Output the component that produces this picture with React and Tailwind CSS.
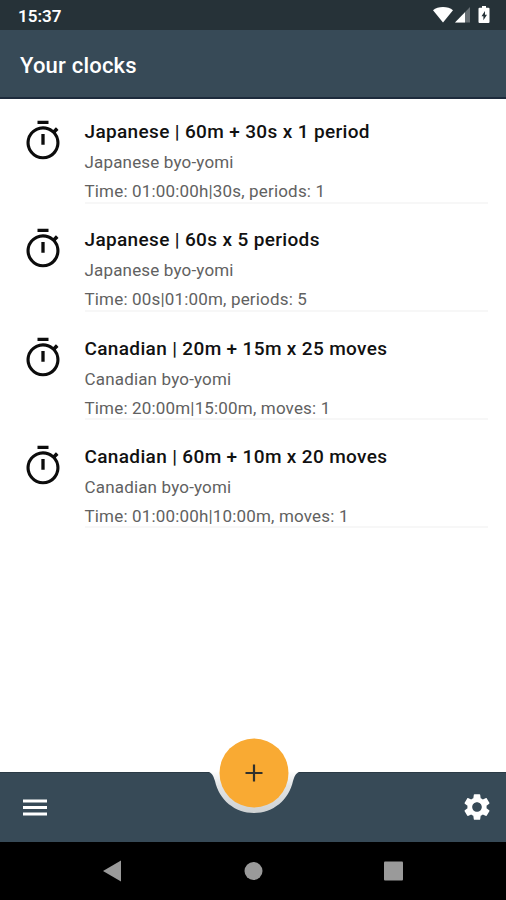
import React from 'react';

const clocks = [
  {
    title: 'Japanese | 60m + 30s x 1 period',
    type: 'Japanese byo-yomi',
    detail: 'Time: 01:00:00h|30s, periods: 1',
  },
  {
    title: 'Japanese | 60s x 5 periods',
    type: 'Japanese byo-yomi',
    detail: 'Time: 00s|01:00m, periods: 5',
  },
  {
    title: 'Canadian | 20m + 15m x 25 moves',
    type: 'Canadian byo-yomi',
    detail: 'Time: 20:00m|15:00m, moves: 1',
  },
  {
    title: 'Canadian | 60m + 10m x 20 moves',
    type: 'Canadian byo-yomi',
    detail: 'Time: 01:00:00h|10:00m, moves: 1',
  },
];

// ===================================================================
// ICONS
// ===================================================================
const TimerIcon = () => (
  <svg className="w-11 h-11 mt-px shrink-0" viewBox="0 0 24 24" fill="#0c0c0c">
    <path d="M9 1h6v1.700H9zM11.100 8.200h1.800v5.800h-1.800z" />
    <path
      fillRule="evenodd"
      d="M19.03 7.39l1.42-1.42c-.43-.51-.9-.99-1.41-1.41l-1.42 1.42A8.96 8.96 0 0 0 12 4a9 9 0 1 0 7.03 3.39zM12 20.300a7.300 7.300 0 1 1 0-14.600 7.300 7.300 0 0 1 0 14.600z"
    />
  </svg>
);

const StatusIcons = () => (
  <svg className="w-[60px] h-5" viewBox="0 0 60 20" fill="#fff">
    <path d="M1 5.200C3.600 3.100 7 2 11 2s7.400 1.100 10 3.200L11 17.500z" />
    <path d="M38 2v15.500H23z" fillOpacity=".3" />
    <path d="M33 7.200v10.300H23z" />
    <path
      fillRule="evenodd"
      d="M50 1h4v1.800h2.500q1 0 1 1V17q0 1-1 1h-9q-1 0-1-1V3.800q0-1 1-1H50zM53 6l-3.500 5.200h1.900V15.200L55 9.800h-2z"
    />
  </svg>
);

const GearIcon = () => (
  <svg className="w-8 h-8 mb-0.5" viewBox="0 0 24 24" fill="#fff">
    <path d="M19.14 12.94c.04-.3.06-.61.06-.94 0-.32-.02-.64-.07-.94l2.03-1.58c.18-.14.23-.41.12-.61l-1.92-3.32c-.12-.22-.37-.29-.59-.22l-2.39.96c-.5-.38-1.03-.7-1.62-.94l-.36-2.54c-.04-.24-.24-.41-.48-.41h-3.84c-.24 0-.43.17-.47.41l-.36 2.54c-.59.24-1.13.57-1.62.94l-2.39-.96c-.22-.08-.47 0-.59.22L2.740 8.870c-.12.21-.08.47.12.61l2.03 1.58c-.05.3-.09.63-.09.94s.02.64.07.94l-2.03 1.58c-.18.14-.23.41-.12.61l1.920 3.320c.12.22.37.29.59.22l2.390-.96c.5.38 1.030.7 1.620.94l.36 2.540c.05.24.24.41.48.41h3.840c.24 0 .44-.17.47-.41l.36-2.540c.59-.24 1.130-.56 1.620-.94l2.390.96c.22.08.47 0 .59-.22l1.920-3.320c.12-.22.07-.47-.12-.61l-2.010-1.580zM12 15.600c-1.980 0-3.600-1.620-3.600-3.600s1.620-3.600 3.600-3.600 3.600 1.620 3.600 3.600-1.620 3.600-3.600 3.600z" />
  </svg>
);

// ===================================================================
// LIST
// ===================================================================
const ClockItem = ({ clock }) => (
  <li className="flex h-[108.25px] pl-[20.5px] pr-[18px]">
    <TimerIcon />
    <div className="ml-5 flex-1 h-[85.5px] border-b-2 border-[#f7f7f7] whitespace-nowrap">
      <p className="h-7 leading-7 text-[19px] font-medium tracking-[0.35px] text-[#111]">{clock.title}</p>
      <p className="h-8 leading-8 text-[17px] tracking-[0.17px] text-[#616161]">{clock.type}</p>
      <p className="h-[26px] leading-[26px] text-[17px] tracking-[0.17px] text-[#616161]">{clock.detail}</p>
    </div>
  </li>
);

// ===================================================================
// BOTTOM BAR (notched around the add button)
// ===================================================================
const BottomBar = () => (
  <footer className="relative h-[70px] shrink-0 bg-[#374a57] border-t border-[#2b3b46] flex items-center justify-between pl-[23px] pr-[13px]">
    <svg className="absolute left-[204px] -top-[38px]" width="100" height="82" viewBox="0 0 100 82">
      <defs>
        <linearGradient id="notch" x1="0" y1="36" x2="0" y2="78" gradientUnits="userSpaceOnUse">
          <stop offset="0" stopColor="#ffffff" />
          <stop offset="0.35" stopColor="#e2e4e5" />
          <stop offset="1" stopColor="#cfd2d3" />
        </linearGradient>
      </defs>
      <path d="M2 36.500C8 37 9 40 11 46C15 65 31 78 50 78S85 65 89 46C91 40 92 37 98 36.500z" fill="url(#notch)" />
      <circle cx="50" cy="38" r="34.500" fill="#f9aa33" />
      <path d="M41.500 38h17M50 29.500v17" stroke="#30302c" strokeWidth="2.200" />
    </svg>
    <svg className="mb-px" width="24" height="17" viewBox="0 0 24 17" fill="#fff">
      <path d="M0 .5h24v3H0zM0 7h24v3H0zM0 13.500h24v3H0z" />
    </svg>
    <GearIcon />
  </footer>
);

const App = () => (
  <div className="flex flex-col w-[506px] h-[900px] overflow-hidden bg-white font-['Roboto',sans-serif]">
    <div className="h-[30px] shrink-0 bg-[#263238] flex items-center justify-between pl-[18px] pr-[14px]">
      <span className="text-[17px] font-semibold text-white pt-[3px]">15:37</span>
      <StatusIcons />
    </div>
    <header className="h-[69px] shrink-0 bg-[#374a57] border-b-2 border-[#1d2b3c] flex items-center pl-5">
      <h1 className="text-[22px] font-medium text-white tracking-[0.2px] pt-1">Your clocks</h1>
    </header>
    <ul className="flex-1 pt-[19px]">
      {clocks.map((clock) => (
        <ClockItem key={clock.title} clock={clock} />
      ))}
    </ul>
    <BottomBar />
    <nav className="h-[58px] shrink-0 bg-black flex justify-center">
      <svg width="300" height="58" viewBox="0 0 300 58" fill="#9a9a9a">
        <path d="M0 29l18-10.500v21z" />
        <circle cx="150.500" cy="29" r="9" />
        <rect x="281" y="19.500" width="19" height="19" rx="1" />
      </svg>
    </nav>
  </div>
);

export default App;
